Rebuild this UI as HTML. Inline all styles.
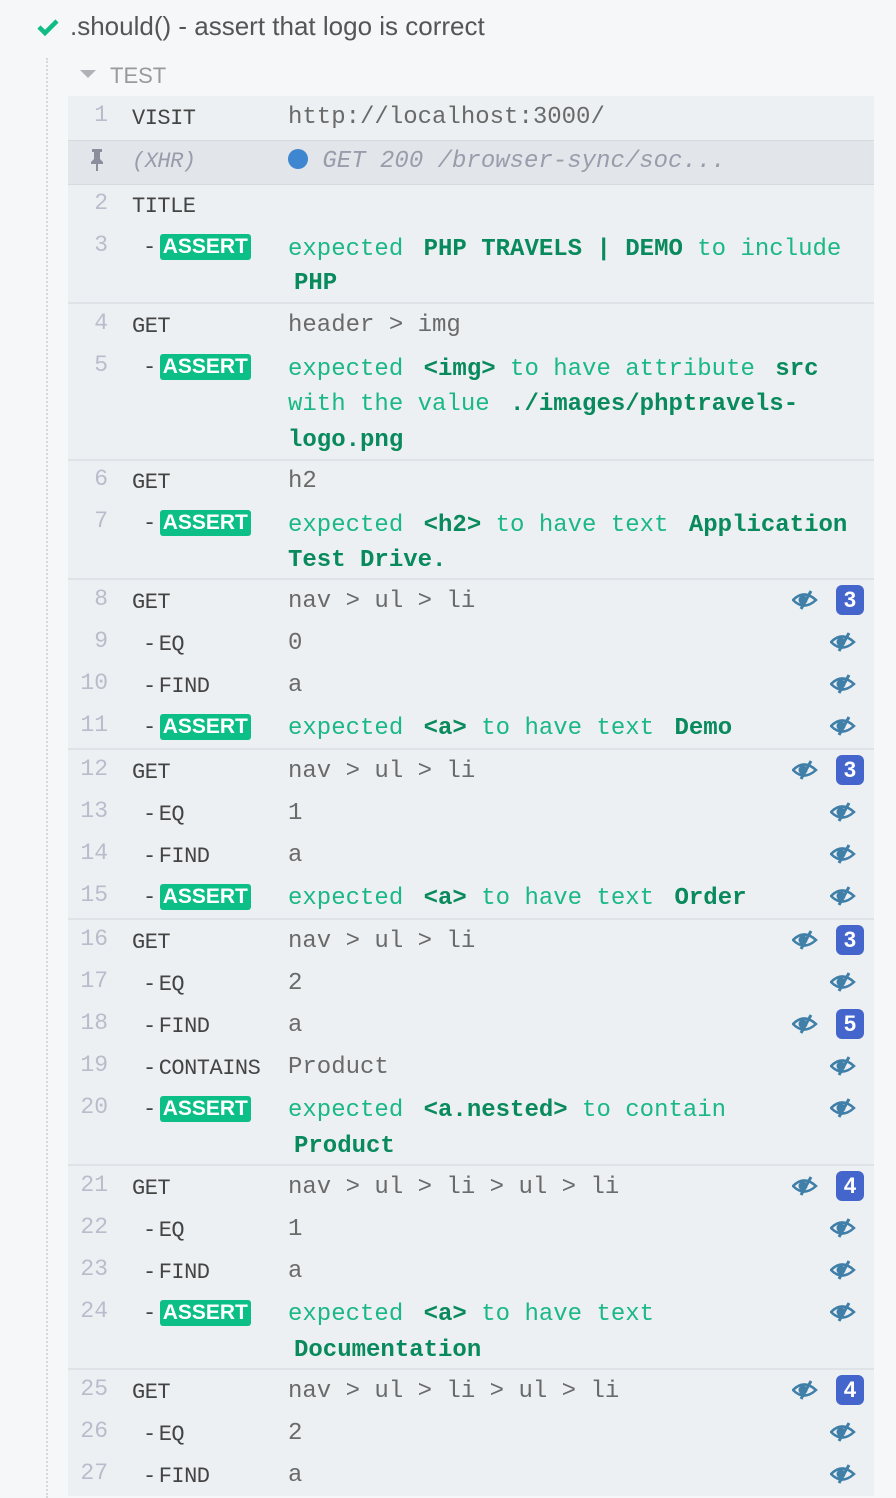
<!DOCTYPE html>
<html><head><meta charset="utf-8"><style>
body{margin:0;width:896px;height:1496px;background:#f6f7f9;position:relative;overflow:hidden;font-family:"Liberation Sans",sans-serif}
.a{position:absolute;white-space:pre}
#panel{position:absolute;left:68px;top:96px;width:806px;height:1400px;background:#edf0f3}
.sep{position:absolute;left:68px;width:806px;height:2px;background:#dfe2e6}
.n{position:absolute;width:40px;left:68px;text-align:right;font-family:"Liberation Mono",monospace;font-size:23px;color:#b9bccb;line-height:30px}
.c{position:absolute;left:132px;font-family:"Liberation Mono",monospace;font-size:22px;color:#444;line-height:30px;white-space:pre;letter-spacing:-0.5px;transform:translateY(1px)}
.c.s{left:143px}
.g{display:inline-block;width:3px}
.v{position:absolute;left:288px;font-family:"Liberation Mono",monospace;font-size:24px;color:#6a6a6a;line-height:36px;white-space:pre;transform:translateY(3px)}
.m{color:#1ab884}
.b{color:#098a5c;font-weight:bold;margin-left:6px}
.badge{display:inline-block;background:#0cbf86;color:#fff;font-family:"Liberation Sans",sans-serif;font-weight:bold;font-size:21px;line-height:26px;padding:0 3px;border-radius:3px;margin-left:4px;letter-spacing:0}
.eye{position:absolute;width:26px;height:20px}
.cnt{position:absolute;left:836px;width:28px;height:30px;border-radius:6px;background:#4466cc;color:#fff;font-size:22px;font-weight:bold;text-align:center;line-height:30px}
</style></head><body>
<svg class="a" style="left:37px;top:18px" width="22" height="18" viewBox="0 0 22 18"><path d="M2 9 L8 15 L20 3" stroke="#0fbd83" stroke-width="4.5" fill="none"/></svg>
<div class="a" style="left:70px;top:11px;font-size:26px;color:#555;line-height:30px">.should() - assert that logo is correct</div>
<div class="a" style="left:46px;top:58px;width:0;height:1440px;border-left:2px dotted #d6d8dc"></div>
<svg class="a" style="left:80px;top:70px" width="16" height="10"><path d="M0 0 L16 0 L8 8Z" fill="#b0b2b8"/></svg>
<div class="a" style="left:110px;top:63px;font-size:22px;color:#9a9a9a;line-height:26px">TEST</div>
<div id="panel"></div>
<div class="a" style="left:68px;top:140px;width:806px;height:43px;background:#e2e5e9;border-top:1px solid #d6d9dd;border-bottom:1px solid #d6d9dd"></div>
<div class="sep" style="top:302px"></div><div class="sep" style="top:459px"></div><div class="sep" style="top:578px"></div><div class="sep" style="top:748px"></div><div class="sep" style="top:918px"></div><div class="sep" style="top:1164px"></div><div class="sep" style="top:1368px"></div>

<div class="n" style="top:100px">1</div><div class="c" style="top:103px">VISIT</div><div class="v" style="top:97px">http://localhost:3000/</div>
<svg class="a" style="left:89px;top:148px" width="16" height="24"><path d="M3 1h10v3h-2v7l3 3v2H9v7H7v-7H2v-2l3-3V4H3z" fill="#8c8f9b"/></svg>
<div class="c" style="top:146px;color:#9a9cab;font-style:italic">(XHR)</div>
<div class="v" style="top:141px;color:#9a9cab;font-style:italic"><span style="display:inline-block;width:20px;height:20px;border-radius:50%;background:#3f86d1;vertical-align:-2px;font-style:normal"></span> GET 200 /browser-sync/soc...</div>
<div class="n" style="top:188px">2</div><div class="c" style="top:191px">TITLE</div>
<div class="n" style="top:230px">3</div><div class="c s" style="top:232px">-<span class="badge">ASSERT</span></div><div class="v m" style="top:229px">expected <span class="b">PHP TRAVELS | DEMO</span> to include</div><div class="v" style="top:263px"><span class="b">PHP</span></div>

<div class="n" style="top:308px">4</div><div class="c" style="top:311px">GET</div><div class="v" style="top:305px">header &gt; img</div>
<div class="n" style="top:350px">5</div><div class="c s" style="top:352px">-<span class="badge">ASSERT</span></div><div class="v m" style="top:349px">expected <span class="b">&lt;img&gt;</span> to have attribute <span class="b">src</span></div>
<div class="v m" style="top:384px">with the value <span class="b">./images/phptravels-</span></div><div class="v" style="top:420px"><span class="b" style="margin-left:0">logo.png</span></div>

<div class="n" style="top:464px">6</div><div class="c" style="top:467px">GET</div><div class="v" style="top:461px">h2</div>
<div class="n" style="top:506px">7</div><div class="c s" style="top:508px">-<span class="badge">ASSERT</span></div><div class="v m" style="top:505px">expected <span class="b">&lt;h2&gt;</span> to have text <span class="b">Application</span></div><div class="v" style="top:540px"><span class="b" style="margin-left:0">Test Drive.</span></div>

<div class="n" style="top:584px">8</div><div class="c" style="top:587px">GET</div><div class="v" style="top:581px">nav &gt; ul &gt; li</div>
<div class="n" style="top:626px">9</div><div class="c s" style="top:629px">-<span class="g"></span>EQ</div><div class="v" style="top:623px">0</div>
<div class="n" style="top:668px">10</div><div class="c s" style="top:671px">-<span class="g"></span>FIND</div><div class="v" style="top:665px">a</div>
<div class="n" style="top:710px">11</div><div class="c s" style="top:712px">-<span class="badge">ASSERT</span></div><div class="v m" style="top:708px">expected <span class="b">&lt;a&gt;</span> to have text <span class="b">Demo</span></div>

<div class="n" style="top:754px">12</div><div class="c" style="top:757px">GET</div><div class="v" style="top:751px">nav &gt; ul &gt; li</div>
<div class="n" style="top:796px">13</div><div class="c s" style="top:799px">-<span class="g"></span>EQ</div><div class="v" style="top:793px">1</div>
<div class="n" style="top:838px">14</div><div class="c s" style="top:841px">-<span class="g"></span>FIND</div><div class="v" style="top:835px">a</div>
<div class="n" style="top:880px">15</div><div class="c s" style="top:882px">-<span class="badge">ASSERT</span></div><div class="v m" style="top:878px">expected <span class="b">&lt;a&gt;</span> to have text <span class="b">Order</span></div>

<div class="n" style="top:924px">16</div><div class="c" style="top:927px">GET</div><div class="v" style="top:921px">nav &gt; ul &gt; li</div>
<div class="n" style="top:966px">17</div><div class="c s" style="top:969px">-<span class="g"></span>EQ</div><div class="v" style="top:963px">2</div>
<div class="n" style="top:1008px">18</div><div class="c s" style="top:1011px">-<span class="g"></span>FIND</div><div class="v" style="top:1005px">a</div>
<div class="n" style="top:1050px">19</div><div class="c s" style="top:1053px">-<span class="g"></span>CONTAINS</div><div class="v" style="top:1047px">Product</div>
<div class="n" style="top:1092px">20</div><div class="c s" style="top:1094px">-<span class="badge">ASSERT</span></div><div class="v m" style="top:1090px">expected <span class="b">&lt;a.nested&gt;</span> to contain</div><div class="v" style="top:1126px"><span class="b">Product</span></div>

<div class="n" style="top:1170px">21</div><div class="c" style="top:1173px">GET</div><div class="v" style="top:1167px">nav &gt; ul &gt; li &gt; ul &gt; li</div>
<div class="n" style="top:1212px">22</div><div class="c s" style="top:1215px">-<span class="g"></span>EQ</div><div class="v" style="top:1209px">1</div>
<div class="n" style="top:1254px">23</div><div class="c s" style="top:1257px">-<span class="g"></span>FIND</div><div class="v" style="top:1251px">a</div>
<div class="n" style="top:1296px">24</div><div class="c s" style="top:1298px">-<span class="badge">ASSERT</span></div><div class="v m" style="top:1294px">expected <span class="b">&lt;a&gt;</span> to have text</div><div class="v" style="top:1330px"><span class="b">Documentation</span></div>

<div class="n" style="top:1374px">25</div><div class="c" style="top:1377px">GET</div><div class="v" style="top:1371px">nav &gt; ul &gt; li &gt; ul &gt; li</div>
<div class="n" style="top:1416px">26</div><div class="c s" style="top:1419px">-<span class="g"></span>EQ</div><div class="v" style="top:1413px">2</div>
<div class="n" style="top:1458px">27</div><div class="c s" style="top:1461px">-<span class="g"></span>FIND</div><div class="v" style="top:1455px">a</div>

<svg width="0" height="0" style="position:absolute"><defs><g id="e"><path d="M1 10 Q12 -1 24 10 Q12 21 1 10Z" fill="none" stroke="#3f7fa8" stroke-width="2.5"/><circle cx="11" cy="10" r="4.5" fill="#3f7fa8"/><path d="M19 1 L9 19" stroke="#3f7fa8" stroke-width="3"/></g></defs></svg>
<svg class="eye" style="left:792px;top:590px" viewBox="0 0 26 20"><use href="#e"/></svg><div class="cnt" style="top:585px">3</div>
<svg class="eye" style="left:830px;top:632px" viewBox="0 0 26 20"><use href="#e"/></svg>
<svg class="eye" style="left:830px;top:674px" viewBox="0 0 26 20"><use href="#e"/></svg>
<svg class="eye" style="left:830px;top:716px" viewBox="0 0 26 20"><use href="#e"/></svg>
<svg class="eye" style="left:792px;top:760px" viewBox="0 0 26 20"><use href="#e"/></svg><div class="cnt" style="top:755px">3</div>
<svg class="eye" style="left:830px;top:802px" viewBox="0 0 26 20"><use href="#e"/></svg>
<svg class="eye" style="left:830px;top:844px" viewBox="0 0 26 20"><use href="#e"/></svg>
<svg class="eye" style="left:830px;top:886px" viewBox="0 0 26 20"><use href="#e"/></svg>
<svg class="eye" style="left:792px;top:930px" viewBox="0 0 26 20"><use href="#e"/></svg><div class="cnt" style="top:925px">3</div>
<svg class="eye" style="left:830px;top:972px" viewBox="0 0 26 20"><use href="#e"/></svg>
<svg class="eye" style="left:792px;top:1014px" viewBox="0 0 26 20"><use href="#e"/></svg><div class="cnt" style="top:1009px">5</div>
<svg class="eye" style="left:830px;top:1056px" viewBox="0 0 26 20"><use href="#e"/></svg>
<svg class="eye" style="left:830px;top:1098px" viewBox="0 0 26 20"><use href="#e"/></svg>
<svg class="eye" style="left:792px;top:1176px" viewBox="0 0 26 20"><use href="#e"/></svg><div class="cnt" style="top:1171px">4</div>
<svg class="eye" style="left:830px;top:1218px" viewBox="0 0 26 20"><use href="#e"/></svg>
<svg class="eye" style="left:830px;top:1260px" viewBox="0 0 26 20"><use href="#e"/></svg>
<svg class="eye" style="left:830px;top:1302px" viewBox="0 0 26 20"><use href="#e"/></svg>
<svg class="eye" style="left:792px;top:1380px" viewBox="0 0 26 20"><use href="#e"/></svg><div class="cnt" style="top:1375px">4</div>
<svg class="eye" style="left:830px;top:1422px" viewBox="0 0 26 20"><use href="#e"/></svg>
<svg class="eye" style="left:830px;top:1464px" viewBox="0 0 26 20"><use href="#e"/></svg>
</body></html>
